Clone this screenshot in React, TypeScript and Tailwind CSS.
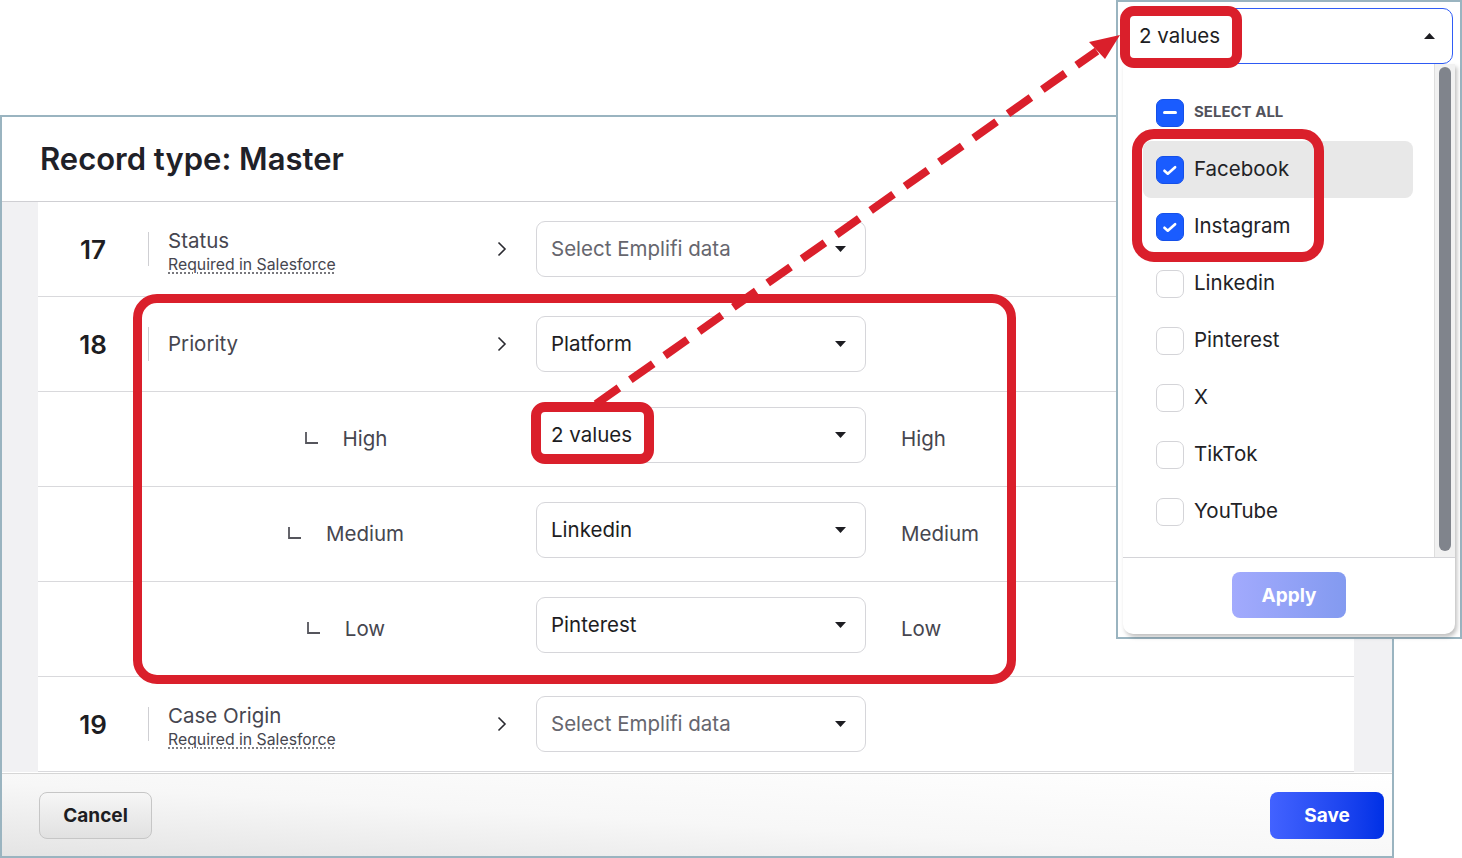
import React from "react";

const RED = "#da1f2b";

function Caret({ up = false }: { up?: boolean }) {
  return (
    <svg width="11" height="6" viewBox="0 0 11 6" className="shrink-0">
      <path d={up ? "M0 6h11L5.5 0z" : "M0 0h11L5.5 6z"} fill="#1d1d22" />
    </svg>
  );
}

function Chevron() {
  return (
    <svg width="10" height="16" viewBox="0 0 10 16">
      <path d="M1.5 1.5 8 8l-6.5 6.5" fill="none" stroke="#2a2a30" strokeWidth="1.6" />
    </svg>
  );
}

function LGlyph() {
  return (
    <svg width="13" height="12" viewBox="0 0 13 12" className="shrink-0 -mt-[3px]">
      <path d="M1 0V11H13" fill="none" stroke="#55555c" strokeWidth="1.8" />
    </svg>
  );
}

function Select({ value, placeholder = false, up = false }: { value: string; placeholder?: boolean; up?: boolean }) {
  return (
    <div
      className={`w-[330px] h-[56px] shrink-0 rounded-[9px] border border-[#d6d6da] bg-white flex items-center justify-between pl-[14px] pr-[19px] ${
        up ? "mb-[8px]" : ""
      }`}
    >
      <span className={`text-[20.5px] ${placeholder ? "text-[#66666e]" : "text-[#1d1d22]"}`}>{value}</span>
      <Caret />
    </div>
  );
}

function MainRow({
  num,
  label,
  required = false,
  value,
  placeholder = false,
}: {
  num: string;
  label: string;
  required?: boolean;
  value: string;
  placeholder?: boolean;
}) {
  return (
    <div className="h-[95px] border-b border-[#d9d9dc] flex items-center">
      <div className="w-[110px] text-center text-[26px] font-semibold text-[#1d1d22]">{num}</div>
      <div className="w-px h-[34px] bg-[#cfcfd3]" />
      <div className={`w-[340px] pl-[19px] flex flex-col ${required ? "mt-[7px]" : ""}`}>
        <span className="text-[20.5px] leading-[24px] text-[#46464f]">{label}</span>
        {required && (
          <span className="text-[15.8px] leading-[24px] text-[#46464f] underline decoration-dotted decoration-[#55555c] underline-offset-[3px]">
            Required in Salesforce
          </span>
        )}
      </div>
      <div className="w-[47px] pl-[8px] flex items-center">
        <Chevron />
      </div>
      <Select value={value} placeholder={placeholder} />
    </div>
  );
}

function SubRow({ label, value, right }: { label: string; value: string; right: string }) {
  return (
    <div className="h-[95px] border-b border-[#d9d9dc] flex items-center">
      <div className="w-[498px] pl-[118px] flex justify-center items-center gap-[25px]">
        <LGlyph />
        <span className="text-[20.5px] text-[#46464f]">{label}</span>
      </div>
      <Select value={value} up />
      <span className="pl-[35px] text-[20.5px] text-[#46464f]">{right}</span>
    </div>
  );
}

function Check({ checked }: { checked: boolean }) {
  if (checked)
    return (
      <div className="w-[28px] h-[28px] rounded-[7px] bg-[#1a5cff] border border-[#1550e8] shrink-0 flex items-center justify-center">
        <svg width="28" height="28" viewBox="0 0 28 28">
          <path d="M8 14.8 11.6 18 19.5 11" fill="none" stroke="white" strokeWidth="2.8" strokeLinecap="round" strokeLinejoin="round" />
        </svg>
      </div>
    );
  return <div className="w-[28px] h-[28px] rounded-[7px] bg-white border border-[#d4d4d8] shrink-0" />;
}

function Item({ label, checked = false, hl = false }: { label: string; checked?: boolean; hl?: boolean }) {
  return (
    <div className={`h-[57px] w-[270px] rounded-[8px] flex items-center pl-[13px] gap-[10px] ${hl ? "bg-[#e8e8e8]" : ""}`}>
      <Check checked={checked} />
      <span className="text-[20.5px] text-[#222226]">{label}</span>
    </div>
  );
}

export default function App() {
  return (
    <div className="relative w-[1462px] h-[858px] bg-white overflow-hidden font-['Inter','Noto_Sans',sans-serif]">
      {/* Main panel */}
      <div className="mt-[115px] w-[1394px] h-[743px] border-2 border-[#9ab4c0] bg-white flex flex-col">
        <div className="h-[85px] border-b border-[#cfcfd3] flex items-center pl-[38px]">
          <h1 className="text-[31px] font-semibold text-[#1f2128]">Record type: Master</h1>
        </div>
        <div className="h-[571px] flex">
          <div className="w-[36px] h-[570px] bg-[#f1f1f3]" />
          <div className="w-[1316px] flex flex-col">
            <MainRow num="17" label="Status" required value="Select Emplifi data" placeholder />
            <MainRow num="18" label="Priority" value="Platform" />
            <SubRow label="High" value="2 values" right="High" />
            <SubRow label="Medium" value="Linkedin" right="Medium" />
            <SubRow label="Low" value="Pinterest" right="Low" />
            <MainRow num="19" label="Case Origin" required value="Select Emplifi data" placeholder />
          </div>
          <div className="flex-1 h-[570px] bg-[#f1f1f3]" />
        </div>
        <div className="h-[83px] border-t border-[#d6d6d6] bg-[linear-gradient(to_top_right,#e4e4e4,#f7f7f7_45%,#ffffff)] flex items-center justify-between pl-[37px] pr-[8px]">
          <button className="w-[113px] h-[47px] rounded-[8px] border border-[#c6c6c6] bg-linear-to-b from-[#f6f6f6] to-[#e1e1e1] text-[19px] font-bold text-[#1d1d22] pt-[2px]">
            Cancel
          </button>
          <button className="w-[114px] h-[47px] rounded-[8px] bg-linear-to-r from-[#4262ff] to-[#0030e6] text-[19px] font-bold text-white pt-[2px]">
            Save
          </button>
        </div>
      </div>

      {/* Dropdown panel */}
      <div className="absolute left-[1116px] top-0 w-[346px] h-[639px] border-2 border-[#9ab4c0] bg-white">
        <div className="ml-[4px] mt-[6px] w-[331px] h-[56px] rounded-[10px] border border-[#2f5cf6] flex items-center justify-between pl-[16px] pr-[17px]">
          <span className="text-[20.5px] text-[#1d1d22] mt-[1px]">2 values</span>
          <Caret up />
        </div>
        <div className="ml-[5px] w-[332px] h-[570px] rounded-b-[10px] bg-white shadow-[2px_3px_4px_rgba(0,0,0,0.25)] flex flex-col">
          <div className="flex h-[493px]">
            <div className="flex-1 pt-[20px] pl-[20px]">
              <div className="h-[57px] w-[270px] flex items-center pl-[13px] gap-[10px]">
                <div className="w-[28px] h-[28px] rounded-[7px] bg-[#1a5cff] border border-[#1550e8] shrink-0 flex items-center justify-center">
                  <div className="w-[14px] h-[3px] rounded-full bg-white" />
                </div>
                <span className="text-[15px] font-bold text-[#52525b]">SELECT ALL</span>
              </div>
              <Item label="Facebook" checked hl />
              <Item label="Instagram" checked />
              <Item label="Linkedin" />
              <Item label="Pinterest" />
              <Item label="X" />
              <Item label="TikTok" />
              <Item label="YouTube" />
            </div>
            <div className="w-[21px] bg-[#f1f1f1] border-l border-[#dedede] pt-[3px] flex justify-center">
              <div className="w-[12px] h-[484px] rounded-full bg-[#80848c]" />
            </div>
          </div>
          <div className="flex-1 border-t border-[#d4d4d8] flex justify-center pt-[14px]">
            <button className="w-[114px] h-[46px] rounded-[8px] bg-linear-to-r from-[#a2aafd] to-[#839af0] text-[19px] font-bold text-white pt-[2px]">
              Apply
            </button>
          </div>
        </div>
      </div>

      {/* Annotations */}
      <div className="absolute left-[133px] top-[294px] w-[883px] h-[390px] border-[9px] border-[#da1f2b] rounded-[24px]" />
      <div className="absolute left-[531px] top-[402px] w-[123px] h-[62px] border-[10px] border-[#da1f2b] rounded-[14px]" />
      <div className="absolute left-[1120px] top-[6px] w-[122px] h-[62px] border-[10px] border-[#da1f2b] rounded-[14px]" />
      <div className="absolute left-[1132px] top-[129px] w-[192px] h-[133px] border-[10px] border-[#da1f2b] rounded-[22px]" />
      <svg className="absolute left-0 top-0 pointer-events-none" width="1462" height="858" viewBox="0 0 1462 858">
        <line x1="596" y1="404" x2="1097" y2="51" stroke={RED} strokeWidth="8" strokeDasharray="28 14" />
        <polygon points="1120,35 1089,42 1105,59" fill={RED} />
      </svg>
    </div>
  );
}
